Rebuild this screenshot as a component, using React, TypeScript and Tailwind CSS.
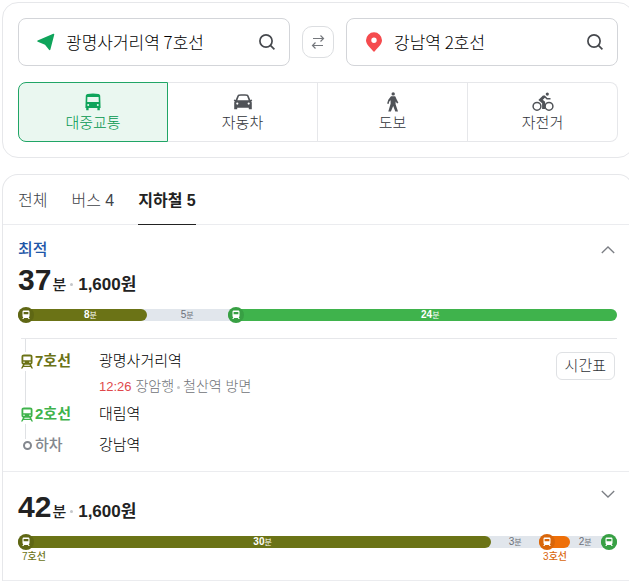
import { type ReactNode } from "react";

type Segment = {
  kind: "ride" | "walk";
  minutes?: number;
  width: string;
  bar?: string;
  dot?: string;
  label?: string;
  labelColor?: string;
};

const modes = [
  { name: "대중교통", icon: <BusIcon /> },
  { name: "자동차", icon: <CarIcon /> },
  { name: "도보", icon: <WalkIcon /> },
  { name: "자전거", icon: <BikeIcon /> },
];

const firstRoute: Segment[] = [
  { kind: "ride", minutes: 8, width: "21.5%", bar: "bg-[#6b7316]", dot: "bg-[#5f6714]" },
  { kind: "walk", minutes: 5, width: "13.5%" },
  { kind: "ride", minutes: 24, width: "65%", bar: "bg-[#3fb34c]", dot: "bg-[#38a044]" },
];

const secondRoute: Segment[] = [
  { kind: "ride", minutes: 30, width: "79%", bar: "bg-[#6b7316]", dot: "bg-[#5f6714]", label: "7호선", labelColor: "text-[#6b7316]" },
  { kind: "walk", minutes: 3, width: "8%" },
  { kind: "ride", width: "5.1%", bar: "bg-[#ee6f08]", dot: "bg-[#d9660a]", label: "3호선", labelColor: "text-[#d9660a]" },
  { kind: "walk", minutes: 2, width: "5.2%" },
  { kind: "ride", width: "2.7%", bar: "bg-[#3fb34c]", dot: "bg-[#38a044]" },
];

function BusIcon() {
  return (
    <svg width="18" height="18" viewBox="0 0 18 18" aria-hidden="true">
      <path
        fill="currentColor"
        fillRule="evenodd"
        d="M3.500.9C6.500.2 11.500.2 14.500.9c1 .3 1.600.9 1.700 1.900L16.600 15h-.8v2.200h-2.400V15H4.600v2.200H2.200V15h-.8L1.800 2.800C1.900 1.800 2.500 1.200 3.500.9zM3.400 4l-.2 5h11.600l-.2-5zM4.200 11a1 1 0 100 2 1 1 0 000-2zm9.600 0a1 1 0 100 2 1 1 0 000-2z"
      />
    </svg>
  );
}

function CarIcon() {
  return (
    <svg width="20" height="18" viewBox="0 0 20 18" aria-hidden="true">
      <path
        fill="currentColor"
        fillRule="evenodd"
        d="M6 1.500C8.500 1.100 11.500 1.100 14 1.500c.8.1 1.300.5 1.600 1.200L17.300 6.800l.4.300 1.200-.5.300 1-.9.700c.3.500.5 1 .5 1.600v6.300h-3v-1.500H4.200v1.500h-3V9.900c0-.6.2-1.100.5-1.600l-.9-.7.300-1 1.200.5.400-.3 1.700-4.100C4.700 2 5.200 1.600 6 1.500zM6 3L4.400 7.300h11.200L14 3C12 2.700 8 2.700 6 3zM4.300 9.500a1.100 1.100 0 100 2.200 1.100 1.100 0 000-2.200zm11.400 0a1.100 1.100 0 100 2.200 1.100 1.100 0 000-2.200z"
      />
    </svg>
  );
}

function WalkIcon() {
  return (
    <svg width="14" height="20" viewBox="0 0 14 20" aria-hidden="true">
      <circle cx="7.200" cy="1.900" r="1.700" fill="currentColor" />
      <path
        fill="currentColor"
        d="M5 4.300h4.200l1.500 3.200 1.700 3.200-1.300.8-1.500-2v2.800L12 19.400H9.300L7.200 14l-2.300 5.400H2.300l2.300-7.600V8.300L3.300 9.600l-.7 2.300-1.500-.4L2.300 7.700z"
      />
    </svg>
  );
}

function BikeIcon() {
  return (
    <svg width="22" height="20" viewBox="0 0 22 20" fill="none" stroke="currentColor" aria-hidden="true">
      <circle cx="5" cy="14.300" r="3.900" strokeWidth="1.500" />
      <circle cx="17" cy="14.300" r="3.900" strokeWidth="1.500" />
      <circle cx="15.300" cy="2.100" r="1.600" fill="currentColor" stroke="none" />
      <path d="M12 3.800l3 3h3.500" strokeWidth="1.600" />
      <path d="M12.300 4.300L8.600 8l3 2.500V17" strokeWidth="3" />
    </svg>
  );
}

function SearchIcon() {
  return (
    <svg width="18" height="18" viewBox="0 0 18 18" fill="none" stroke="#45484d" strokeWidth="1.700" aria-hidden="true">
      <circle cx="8" cy="8" r="6.100" />
      <path d="M12.400 12.400l4 4" />
    </svg>
  );
}

function StartIcon() {
  return (
    <svg width="18" height="18" viewBox="0 0 18 18" aria-hidden="true">
      <path d="M.6 7.400L16.300.8c.6-.2 1.100.1 1 .7L13.400 16.600c-.2.700-1 .8-1.400.2L8 11.800.8 8.700c-.7-.3-.7-1-.2-1.300z" fill="#0fa45b" />
    </svg>
  );
}

function PinIcon() {
  return (
    <svg width="18" height="20" viewBox="0 0 18 20" aria-hidden="true">
      <path
        fill="#f54b4e"
        fillRule="evenodd"
        d="M9 .3a8 8 0 018 8c0 4.500-4.500 7.200-7 10.700a1.200 1.200 0 01-2 0C5.500 15.500 1 12.800 1 8.300a8 8 0 018-8zm0 5.300a2.700 2.700 0 100 5.400 2.700 2.700 0 000-5.400z"
      />
    </svg>
  );
}

function SwapIcon() {
  return (
    <svg width="16" height="16" viewBox="0 0 16 16" fill="none" stroke="#75787d" strokeWidth="1.200" aria-hidden="true">
      <path d="M3 4.500h10.500M10.500 1.500l3 3-3 3M13 11.500H2.500M5.500 8.500l-3 3 3 3" />
    </svg>
  );
}

// front view of a train standing on its rails
function RailIcon() {
  return (
    <svg width="12" height="15" viewBox="0 0 12 15" aria-hidden="true">
      <path
        fill="currentColor"
        fillRule="evenodd"
        d="M3 .5h6c1.500 0 2.500.9 2.500 2.300v5.700c0 1.100-.6 1.800-1.500 2.100l2 3.900h-1.500l-.9-1.600H2.400L1.500 14.500H0l2-3.900C1.100 10.300.5 9.600.5 8.500V2.800C.5 1.400 1.500.5 3 .5zM2.300 2.400v3.800h7.400V2.400zM3 7.500a.8.800 0 100 1.600.8.800 0 000-1.600zm6 0a.8.800 0 100 1.600.8.800 0 000-1.600zM3.600 10.700l-.5 1h5.800l-.5-1z"
      />
    </svg>
  );
}

function DotTrainIcon() {
  return (
    <svg width="8" height="10" viewBox="0 0 8 10" aria-hidden="true">
      <path
        fill="currentColor"
        fillRule="evenodd"
        d="M2 .5h4c.9 0 1.500.5 1.500 1.400v4c0 .7-.3 1.100-.8 1.300L7.800 9H6.500l-.7-1H2.200l-.7 1H.2l1.100-1.800C.8 7 .5 6.600.5 5.900v-4C.5 1 1.100.5 2 .5zM1.600 2v2.200h4.800V2z"
      />
    </svg>
  );
}

function Chevron({ up }: { up?: boolean }) {
  return (
    <svg width="14" height="8" viewBox="0 0 14 8" fill="none" stroke="#7b7e84" strokeWidth="1.300" aria-hidden="true">
      <path d={up ? "M.8 7L7 1l6.200 6" : "M.8 1L7 7l6.200-6"} />
    </svg>
  );
}

function PlaceField({ label, value, icon }: { label: string; value: string; icon: ReactNode }) {
  return (
    <div className="flex h-12 min-w-0 flex-1 items-center rounded-lg border border-[#d3d5d9] pl-4">
      <span className="flex w-[22px] shrink-0 justify-center">{icon}</span>
      <input
        aria-label={label}
        defaultValue={value}
        className="ml-[9px] min-w-0 flex-1 bg-transparent font-['Noto_Sans_CJK_KR',sans-serif] text-[17px] leading-6 font-light text-black outline-none"
      />
      <button type="button" aria-label="검색" className="mr-[13px] shrink-0">
        <SearchIcon />
      </button>
    </div>
  );
}

function RouteBar({ segments }: { segments: Segment[] }) {
  return (
    <div className="flex h-3 rounded-full bg-[#e1e6ec]">
      {segments.map((seg, i) => (
        <div
          key={i}
          className={`relative flex h-3 items-center justify-center rounded-full text-[10px] leading-3 ${
            seg.kind === "ride" ? `${seg.bar} pl-4 font-bold text-white` : "text-[#6b7079]"
          }`}
          style={{ width: seg.width }}
        >
          {seg.kind === "ride" && (
            <span className={`absolute -top-0.5 left-0 flex size-4 items-center justify-center rounded-full text-white ${seg.dot}`}>
              <DotTrainIcon />
            </span>
          )}
          {seg.minutes && (
            <span>
              {seg.minutes}
              <span className="text-[8px] font-normal">분</span>
            </span>
          )}
          {seg.label && (
            <span className={`absolute top-[13px] left-1 text-[10px] leading-4 font-medium whitespace-nowrap ${seg.labelColor}`}>
              {seg.label}
            </span>
          )}
        </div>
      ))}
    </div>
  );
}

function Summary({ minutes }: { minutes: number }) {
  return (
    <div className="flex items-baseline text-[#222]">
      <strong className="text-[30px] leading-9">{minutes}</strong>
      <span className="ml-px text-[15px] font-medium">분</span>
      <span className="mr-[5px] ml-1 size-[3px] -translate-y-1 rounded-full bg-[#c4c6ca]" />
      <strong className="text-[17px]">1,600원</strong>
    </div>
  );
}

function Stop({ line, color, icon, children }: { line: string; color: string; icon: ReactNode; children: ReactNode }) {
  return (
    <li className="flex">
      <div className={`flex h-6 w-[78px] shrink-0 items-center gap-0.5 text-[15px] ${color}`}>
        <span className="flex w-3 justify-center bg-white py-0.5">{icon}</span>
        {line}
      </div>
      <div className="text-[15px] leading-6 font-light text-black">{children}</div>
    </li>
  );
}

export default function App() {
  return (
    <div className="min-h-screen overflow-hidden bg-white font-['Liberation_Sans','Noto_Sans_CJK_KR',sans-serif]">
      <main className="-mr-[5px] pt-0.5 pl-0.5">
        <section className="rounded-2xl border border-[#e6e7ea] p-[15px]">
          <div className="flex items-center gap-3">
            <PlaceField label="출발지" value="광명사거리역 7호선" icon={<StartIcon />} />
            <button
              type="button"
              aria-label="출발지와 도착지 바꾸기"
              className="flex size-8 shrink-0 items-center justify-center rounded-[10px] border border-[#dcdee1]"
            >
              <SwapIcon />
            </button>
            <PlaceField label="도착지" value="강남역 2호선" icon={<PinIcon />} />
          </div>

          <div className="mt-4 grid h-[60px] grid-cols-4">
            {modes.map((mode, i) => (
              <button
                key={mode.name}
                type="button"
                className={`flex flex-col items-center border pt-2 text-[15px] leading-5 ${
                  i === 0
                    ? "rounded-l-lg border-[#20a566] bg-[#eaf7f0] text-[#0fa45b]"
                    : "border-l-0 border-[#e6e7ea] text-[#505358] last:rounded-r-lg"
                }`}
              >
                <span className="flex h-[22px] items-center">{mode.icon}</span>
                <span className={i === 0 ? "font-light text-[#00964d]" : "font-light text-[#303338]"}>{mode.name}</span>
              </button>
            ))}
          </div>
        </section>

        <section className="mt-4 rounded-t-2xl border border-b-0 border-[#e6e7ea]">
          <div role="tablist" className="flex h-[50px] gap-6 border-b border-[#ebecef] px-[15px] text-base text-[#404348]">
            <button type="button" role="tab" aria-selected="false" className="pt-0.5 font-light">전체</button>
            <button type="button" role="tab" aria-selected="false" className="pt-0.5 font-light">버스 4</button>
            <button type="button" role="tab" aria-selected="true" className="-mb-px border-b border-[#222] pt-0.5 font-bold text-[#222]">
              지하철 5
            </button>
          </div>

          <article className="border-b border-[#ebecef] pt-[13px] pr-4 pb-3.5 pl-[15px]">
            <div className="flex items-center justify-between">
              <h2 className="text-base leading-6 font-medium text-[#1f57a8]">최적</h2>
              <button type="button" aria-label="접기" className="mr-0.5">
                <Chevron up />
              </button>
            </div>
            <Summary minutes={37} />
            <div className="mt-[11px]">
              <RouteBar segments={firstRoute} />
            </div>

            <div className="relative mt-[17px] ml-[3px] flex items-start justify-between border-t border-[#e6e7ea] pt-2.5">
              <span className="absolute top-0 left-1 h-[100px] w-px bg-[#dfe1e4]" />
              <ol className="relative">
                <Stop line="7호선" color="font-bold text-[#6b7316]" icon={<RailIcon />}>
                  광명사거리역
                  <p className="pb-0.5 text-sm leading-[26px] text-[#707277]">
                    <span className="text-[13px] text-[#e0484b]">12:26</span> 장암행
                    <span className="mx-[3px] inline-block size-[3px] rounded-full bg-[#c4c6ca] align-middle" />
                    철산역 방면
                  </p>
                </Stop>
                <Stop line="2호선" color="font-bold text-[#3fb34c]" icon={<RailIcon />}>
                  대림역
                </Stop>
                <li className="h-[7px]" />
                <Stop
                  line="하차"
                  color="font-medium text-[#83878e]"
                  icon={<span className="size-[9px] rounded-full border-2 border-[#83878e]" />}
                >
                  강남역
                </Stop>
              </ol>
              <button type="button" className="mt-[3px] mr-0.5 h-7 rounded-md border border-[#dfe1e4] px-2 text-[15px] font-light text-[#303338]">
                시간표
              </button>
            </div>
          </article>

          <article className="border-b border-[#ebecef] pt-[17px] pr-4 pb-8 pl-[15px]">
            <div className="flex items-start justify-between">
              <Summary minutes={42} />
              <button type="button" aria-label="펼치기" className="mr-0.5 pt-px">
                <Chevron />
              </button>
            </div>
            <div className="mt-[11px]">
              <RouteBar segments={secondRoute} />
            </div>
          </article>
        </section>
      </main>
    </div>
  );
}
